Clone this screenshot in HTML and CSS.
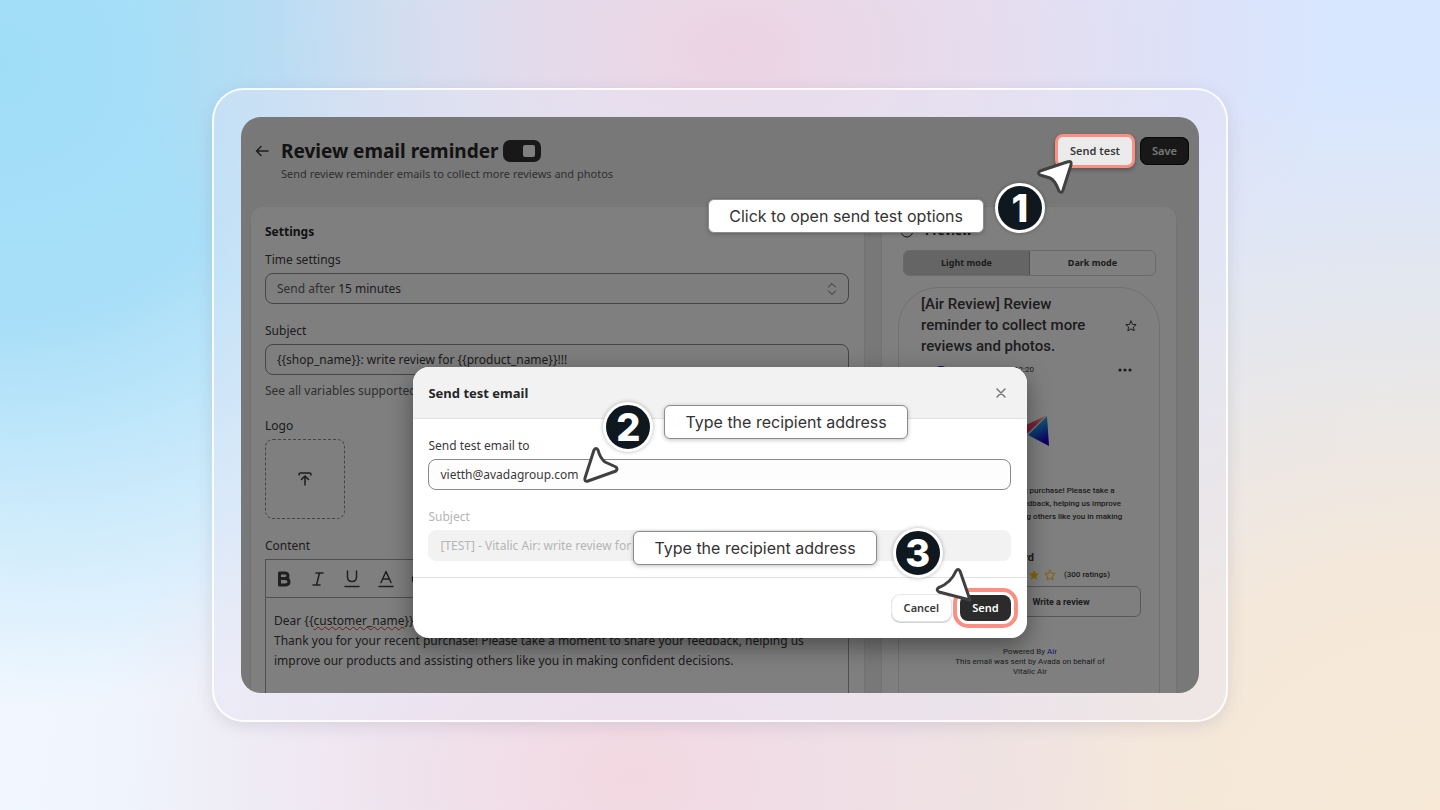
FILE: index.html
```
<!DOCTYPE html>
<html lang="en">
<head>
  <meta charset="UTF-8"/>
  <meta name="viewport" content="width=device-width, initial-scale=1.0"/>
  <title>Review email reminder</title>
  <link rel="stylesheet" href="styles.css">
</head>
<body>
<div class="frame">
  <main class="app">
    <header class="page-head">
      <button class="back" aria-label="Back">
        <svg width="14" height="12" viewBox="0 0 14 12"><path d="M13 6H1.500M6 1.500L1.500 6L6 10.500"/></svg>
      </button>
      <div class="heading">
        <div class="title-row">
          <h1>Review email reminder</h1>
          <input type="checkbox" class="switch" aria-label="Enable reminder" checked/>
        </div>
        <p>Send review reminder emails to collect more reviews and photos</p>
      </div>
      <div class="actions">
        <button class="btn-test">Send test</button>
        <button class="btn-save">Save</button>
      </div>
    </header>

    <div class="columns">
      <section class="card settings">
        <h2>Settings</h2>
        <div class="form-group">
          <label for="delay">Time settings</label>
          <div class="field select">
            <span>Send after</span>
            <select id="delay"><option>15 minutes</option><option>1 day</option></select>
            <svg width="10" height="14" viewBox="0 0 10 14"><path d="M1.500 5L5 1.500L8.500 5M1.500 9L5 12.500L8.500 9"/></svg>
          </div>
        </div>
        <div class="form-group">
          <label for="subject">Subject</label>
          <input type="text" class="field" id="subject" value="{{shop_name}}: write review for {{product_name}}!!!"/>
          <p class="help">See all variables supported</p>
        </div>
        <div class="form-group">
          <label for="logo">Logo</label>
          <button class="dropzone" id="logo" aria-label="Upload logo">
            <svg width="14" height="14" viewBox="0 0 14 14"><path d="M1 3V2.500Q1 1 2.500 1H11.500Q13 1 13 2.500V3M7 13V4.500M3.500 7.500L7 4L10.500 7.500"/></svg>
          </button>
        </div>
        <div class="form-group">
          <span class="label">Content</span>
          <div class="editor">
            <div class="toolbar">
              <button aria-label="Bold"><svg width="18" height="18" viewBox="0 0 18 18"><path class="heavy" d="M4.500 3H9.500Q13 3 13 5.800Q13 8.500 9.500 8.500H4.500ZM4.500 8.500H10Q14 8.500 14 11.700Q14 15 10 15H4.500Z"/></svg></button>
              <button aria-label="Italic"><svg width="18" height="18" viewBox="0 0 18 18"><path d="M7 3H14M4 15H11M10.500 3L7.500 15"/></svg></button>
              <button aria-label="Underline"><svg width="18" height="18" viewBox="0 0 18 18"><path d="M4.500 1V7Q4.500 11.500 9 11.500Q13.500 11.500 13.500 7V1M2 16.500H16"/></svg></button>
              <button aria-label="Text colour"><svg width="18" height="18" viewBox="0 0 18 18"><path d="M4 12.500L9 1.500L14 12.500M5.500 9H12.500M2 16.500H16"/></svg></button>
              <button aria-label="Link"><svg width="18" height="18" viewBox="0 0 18 18"><path d="M8 5H5Q1.500 5 1.500 9Q1.500 13 5 13H8M10 5H13Q16.500 5 16.500 9Q16.500 13 13 13H10M6 9H12"/></svg></button>
            </div>
            <div class="editor-body">
              <p>Dear {{<span class="misspelt">customer_name</span>}},</p>
              <p>Thank you for your recent purchase! Please take a moment to share your feedback, helping us improve our products and assisting others like you in making confident decisions.</p>
            </div>
          </div>
        </div>
      </section>

      <section class="card preview">
        <h2>
          <svg width="14" height="14" viewBox="0 0 14 14"><circle cx="7" cy="7" r="6"/><path d="M7 4V7.500H9.500"/></svg>
          Preview
        </h2>
        <div class="segmented">
          <button class="on">Light mode</button>
          <button>Dark mode</button>
        </div>
        <div class="phone">
          <div class="mail-title">
            <h3>[Air Review] Review reminder to collect more reviews and photos.</h3>
            <svg width="12" height="12" viewBox="0 0 12 12"><path d="M6 1L7.500 4.300L11.200 4.700L8.400 7.100L9.200 10.800L6 8.900L2.800 10.800L3.600 7.100L.8 4.700L4.500 4.300Z"/></svg>
          </div>
          <div class="mail-meta">
            <span class="avatar"></span>
            <time>12:20</time>
            <svg width="14" height="4" viewBox="0 0 14 4"><circle cx="2" cy="2" r="1.600"/><circle cx="7" cy="2" r="1.600"/><circle cx="12" cy="2" r="1.600"/></svg>
          </div>
          <svg class="brand" width="44" height="36" viewBox="0 0 44 36">
            <defs>
              <linearGradient id="warm" x1="0" y1="1" x2="1" y2="0"><stop offset="0" stop-color="#ff2a5c"/><stop offset=".6" stop-color="#e8476a"/><stop offset="1" stop-color="#ffd28a"/></linearGradient>
              <linearGradient id="cool" x1="0" y1="0" x2=".4" y2="1"><stop offset="0" stop-color="#7fe3e6"/><stop offset=".5" stop-color="#1787e0"/><stop offset="1" stop-color="#1a00c8"/></linearGradient>
            </defs>
            <path fill="url(#warm)" d="M40 2L2 20L20 21Z"/>
            <path fill="url(#cool)" d="M40 3L21 22L42 33Z"/>
          </svg>
          <p class="mail-text">Thank you for your recent purchase! Please take a moment to share your feedback, helping us improve our products and assisting others like you in making confident decisions.</p>
          <h4>Snowboard</h4>
          <div class="rating">
            <svg width="76" height="12" viewBox="0 0 76 12">
              <defs><path id="star" d="M6 .8L7.500 4.200L11.200 4.600L8.400 7.100L9.200 10.800L6 8.900L2.800 10.800L3.600 7.100L.8 4.600L4.500 4.200Z"/></defs>
              <use href="#star"/><use href="#star" x="16"/><use href="#star" x="32"/><use href="#star" x="48"/><use class="empty" href="#star" x="64"/>
            </svg>
            (300 ratings)
          </div>
          <button class="write">Write a review</button>
          <footer>Powered By <a href="#">Air</a><br>This email was sent by Avada on behalf of<br>Vitalic Air</footer>
        </div>
      </section>
    </div>

    <form class="modal" role="dialog" aria-labelledby="modal-title">
      <div class="modal-head">
        <h2 id="modal-title">Send test email</h2>
        <button type="button" class="close" aria-label="Close"><svg width="10" height="10" viewBox="0 0 10 10"><path d="M1 1L9 9M9 1L1 9"/></svg></button>
      </div>
      <div class="modal-body">
        <div class="form-group">
          <label for="to">Send test email to</label>
          <input type="text" class="field" id="to" value="vietth@avadagroup.com"/>
        </div>
        <div class="form-group off">
          <label for="testSubject">Subject</label>
          <input type="text" class="field" id="testSubject" value="[TEST] - Vitalic Air: write review for {{product_name}}!!!" disabled/>
        </div>
      </div>
      <div class="modal-foot">
        <button type="button" class="btn-cancel">Cancel</button>
        <button type="button" class="btn-send">Send</button>
      </div>

      <div class="callout step2"><b>2</b><span class="tip">Type the recipient address</span></div>
      <svg class="pointer pointer2" width="40" height="40" viewBox="0 0 40 40"><path d="M14 4Q16 1 18 4Q20 12 25 16L36 21Q38 23 36 25L8 35Q4 36 5 32Z"/></svg>
      <div class="callout step3"><span class="tip">Type the recipient address</span><b>3</b></div>
      <svg class="pointer pointer3" width="40" height="40" viewBox="0 0 40 40"><path d="M22 5Q24 2 26 5L36 34L5 26Q2 24 4 22Q17 17 22 5Z"/></svg>
    </form>

    <div class="callout step1"><span class="tip">Click to open send test options</span><b>1</b></div>
    <svg class="pointer pointer1" width="40" height="40" viewBox="0 0 40 40"><path d="M32 4Q37 2 36 7L28 32Q27 36 24 33Q20 22 15 20L5 17Q2 15 5 13Z"/></svg>
  </main>
</div>
</body>
</html>
```
FILE: styles.css
```
* { box-sizing: border-box; margin:0; padding:0; }
body {
  height: 100vh; padding: 88px 212px; overflow: hidden;
  font-family: "Noto Sans", sans-serif; font-size: 12px; line-height: 16px; color: #3a3a3a;
  background:
    radial-gradient(ellipse 42% 50% at 51% 6%, #ebd3e3 0%, rgba(235,211,227,0) 100%),
    radial-gradient(ellipse 38% 50% at 44% 96%, #f3d8e1 0%, rgba(243,216,225,0) 100%),
    radial-gradient(ellipse 62% 90% at 100% 100%, #f7e9d6 0%, #f4e8db 35%, rgba(244,232,219,0) 100%),
    radial-gradient(ellipse 48% 80% at 0% 8%, #9fddf7 0%, #a9dff8 40%, rgba(169,223,248,0) 100%),
    linear-gradient(100deg, #f4f9ff 0%, #e8f0fd 45%, #d8e6ff 75%, #d6e7ff 100%);
}
button, input, select { font: inherit; color: inherit; }
button { border: none; background: none; cursor: pointer; }
svg { fill: none; stroke: currentColor; stroke-linecap: round; stroke-linejoin: round; flex: none; }

.frame {
  height: 100%; padding: 27px; border: 2px solid rgba(255,255,255,.85); border-radius: 32px;
  background: rgba(230,230,245,.4); box-shadow: 0 4px 16px rgba(110,110,140,.18);
}
.app { position: relative; height: 100%; overflow: hidden; border-radius: 20px; background: #f1f1f1; }
.app::after { content: ""; position: absolute; inset: 0; background: rgba(0,0,0,.5); }

/* page header */
.page-head { display: flex; align-items: flex-start; height: 90px; padding: 19px 10px 0 14px; }
.back { display: flex; align-items: center; height: 30px; margin-right: 12px; }
.back svg { stroke-width: 1.500; }
.heading { flex: 1; }
.title-row { display: flex; align-items: center; gap: 4px; height: 30px; }
h1 { font-size: 19px; line-height: 28px; font-weight: 700; color: #262626; }
.heading p { font-size: 11px; color: #616161; }
.switch { appearance: none; width: 38px; height: 22px; padding: 5px 6px; border-radius: 7px; background: #303030; }
.switch::before { content: ""; display: block; width: 12px; height: 12px; margin-left: auto; border-radius: 2px; background: #fff; }
.actions { display: flex; align-items: center; gap: 5px; margin-top: -2px; }
.actions button { height: 28px; padding: 0 12px; border-radius: 8px; font-size: 11px; font-weight: 600; }
.actions .btn-test { position: relative; z-index: 1; height: 34px; border: 3px solid #fb8f82; background: #ebebeb; box-shadow: 0 2px 4px rgba(0,0,0,.3); }
.actions .btn-save { background: #303030; color: #eee; box-shadow: inset 0 0 0 1px #111; }

/* two columns */
.columns { display: grid; grid-template-columns: minmax(0, 1fr) 294px; gap: 18px; padding: 0 23px 0 10px; }
.card { height: 600px; border-radius: 12px; background: #fff; box-shadow: 0 1px 2px rgba(0,0,0,.15); }
.settings { padding: 17px 15px 0 14px; }
h2 { font-size: 12px; line-height: 16px; font-weight: 700; color: #262626; }
.form-group { display: flex; flex-direction: column; }
.form-group label, .label { margin-bottom: 5px; line-height: 16px; }
.settings h2 { margin-bottom: 12px; }
.settings .form-group { margin-bottom: 19px; }
.field { width: 100%; height: 31px; padding: 0 11px; border: 1px solid #8a8a8a; border-radius: 8px; background: #fdfdfd; }
.select { display: flex; align-items: center; gap: 3px; }
.select span { color: #616161; }
.select select { flex: 1; appearance: none; border: none; background: none; }
.select svg { color: #616161; }
.help { margin-top: 8px; color: #616161; }
.dropzone { display: flex; align-items: center; justify-content: center; width: 80px; height: 80px; border: 1px dashed #8a8a8a; border-radius: 8px; }
.dropzone svg { stroke-width: 1.500; }
.editor { height: 260px; border: 1px solid #a0a0a0; }
.toolbar { display: flex; align-items: center; gap: 16px; height: 38px; padding: 0 9px; border-bottom: 1px solid #a0a0a0; color: #404040; }
.toolbar button { display: flex; }
.toolbar svg { stroke-width: 1.500; }
.toolbar .heavy { stroke-width: 3; }
.editor-body { padding: 13px 8px; line-height: 20px; }
.misspelt { text-decoration: underline wavy #d33 1px; }

/* preview */
.preview { padding: 16px 16px 0; }
.preview h2 { display: flex; align-items: center; gap: 11px; padding-left: 2px; }
.segmented { display: flex; height: 26px; margin: 11px 4px 11px 5px; border: 1px solid #d4d4d4; border-radius: 6px; overflow: hidden; }
.segmented button { flex: 1; font-size: 9px; font-weight: 700; }
.segmented .on { background: #cacaca; border-right: 1px solid #a0a0a0; }
.phone { height: 560px; padding: 6px 18px 0 22px; border: 1px solid #e0e0e0; border-radius: 40px; font-family: Roboto, sans-serif; font-size: 8px; }
.mail-title { display: flex; align-items: center; justify-content: space-between; padding-right: 4px; }
h3 { width: 180px; font-size: 15px; line-height: 21px; font-weight: 500; }
.mail-meta { display: flex; align-items: center; height: 25px; padding: 0 9px 0 12px; }
.mail-meta svg { margin-left: auto; fill: currentColor; stroke: none; }
.avatar { width: 16px; height: 16px; margin-right: 65px; border-radius: 50%; background: #2a00d0; align-self: flex-end; }
.brand { display: block; margin: 31px 0 0 86px; stroke: none; }
.mail-text { width: 190px; margin: 35px 0 0 15px; line-height: 13px; font-weight: 500; }
h4 { width: 113px; margin-top: 14px; font-size: 11px; line-height: 16px; font-weight: 700; text-align: right; }
.rating { display: flex; align-items: center; gap: 8px; height: 16px; margin: 1px 0 3px 59px; font-weight: 500; }
.rating svg { fill: #ffc71f; stroke: none; }
.rating .empty { fill: none; stroke: #ffc71f; }
.write { display: block; width: 160px; height: 31px; margin-left: auto; border: 1px solid #b0b0b0; border-radius: 6px; font-size: 9px; font-weight: 700; }
footer { margin-top: 30px; padding-right: 2px; line-height: 10px; text-align: center; }
footer a { color: #2a2ae0; text-decoration: none; }

/* send test dialog */
.modal { position: absolute; z-index: 1; top: 250px; left: 18%; width: 64%; border-radius: 16px; background: #fff; box-shadow: 0 8px 24px rgba(0,0,0,.4); }
.modal-head { display: flex; align-items: center; justify-content: space-between; height: 52px; padding: 0 21px 0 15px; border-bottom: 1px solid #e3e3e3; border-radius: 16px 16px 0 0; background: #f2f2f2; }
.modal-head h2 { font-size: 13px; }
.close { display: flex; color: #777; }
.close svg { stroke-width: 1.500; }
.modal-body { display: flex; flex-direction: column; gap: 19px; padding: 19px 16px 16px 15px; border-bottom: 1px solid #e3e3e3; }
.off { color: #b5b5b5; }
.field:disabled { border-color: #f2f2f2; background: #f2f2f2; }
.modal-foot { display: flex; justify-content: flex-end; gap: 9px; padding: 17px 16px; }
.modal-foot button { height: 26px; padding: 0 12px; border-radius: 8px; font-size: 11px; font-weight: 600; }
.btn-cancel { box-shadow: 0 0 0 1px #e6e6e6, 0 1px 0 1px #d0d0d0; }
.modal-foot .btn-send { background: #2b2b2b; color: #fff; outline: 4px solid #fb8f82; outline-offset: 3px; }

/* walkthrough callouts */
.callout { position: absolute; z-index: 2; display: flex; align-items: flex-start; gap: 11px; }
.tip { padding: 6px 20px; border: 1px solid #8c8c8c; border-radius: 6px; background: #fff; color: #333; font-family: Inter, sans-serif; font-size: 16px; line-height: 20px; white-space: nowrap; box-shadow: 0 1px 4px rgba(0,0,0,.25); }
.callout b { width: 50px; height: 50px; border: 3px solid #fff; border-radius: 50%; background: #10181f; color: #fff; font: 800 38px/44px Inter, sans-serif; text-align: center; box-shadow: 0 0 4px rgba(0,0,0,.3); }
.step1 { top: 66px; right: 154px; align-items: flex-end; }
.step2 { top: 35px; left: 190px; }
.step3 { top: 161px; left: 220px; gap: 16px; }
.step2 .tip, .step3 .tip { margin-top: 3px; }
.pointer { position: absolute; z-index: 3; fill: #fff; color: #404040; stroke-width: 3; }
.pointer1 { top: 41px; right: 124px; }
.pointer2 { top: 79px; left: 167px; }
.pointer3 { top: 199px; left: 521px; }
```
